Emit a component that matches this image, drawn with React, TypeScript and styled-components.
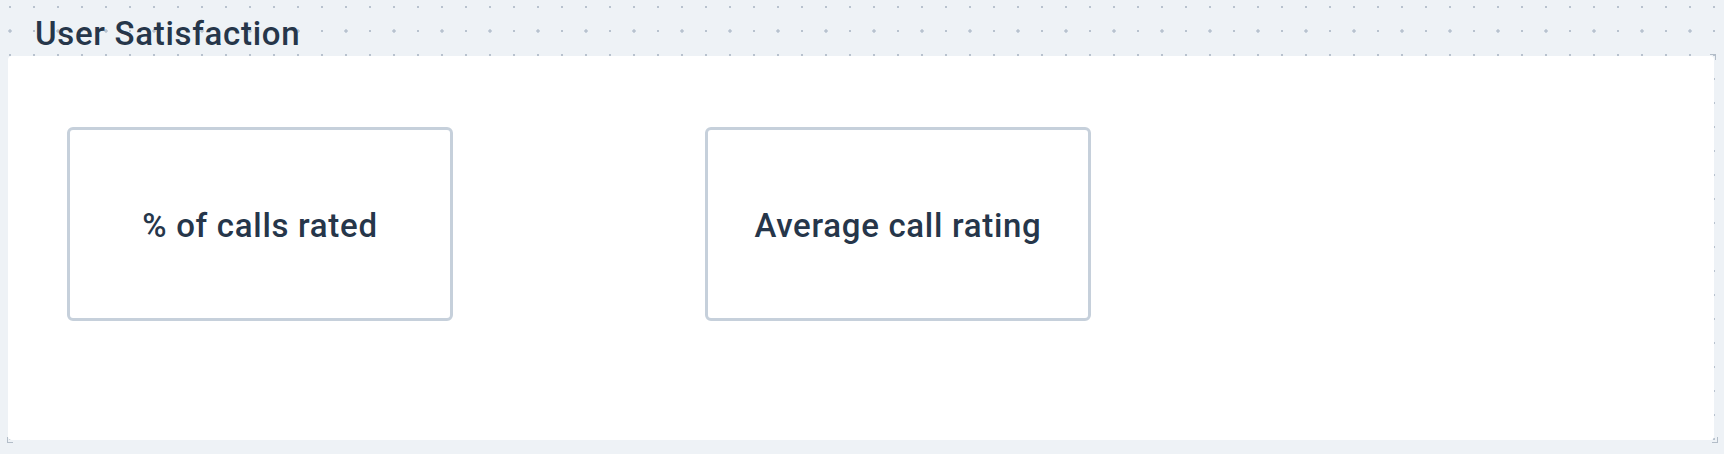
import React from "react";
import styled, { createGlobalStyle } from "styled-components";

const GlobalStyle = createGlobalStyle`
  html, body {
    margin: 0;
    padding: 0;
    background: #eef2f6;
  }
  body {
    font-family: Roboto, "Noto Sans", "Liberation Sans", sans-serif;
    color: #243447;
  }
`;

// dotted canvas, small dots every 24px and bigger ones every 48px
const Canvas = styled.div`
  width: 1724px;
  height: 454px;
  box-sizing: border-box;
  padding: 0 10px 0 8px;
  background-color: #eef2f6;
  background-image: radial-gradient(circle, #b8c2ce 0.9px, transparent 1.3px),
    radial-gradient(circle, #c9d2dd 1.6px, transparent 2.1px);
  background-size: 24px 24px, 48px 48px;
  background-position: -2px -5px, -14px 7px;
  overflow: hidden;
`;

const SectionTitle = styled.h2`
  margin: 0;
  padding: 14px 0 0 27px;
  height: 56px;
  box-sizing: border-box;
  font-size: 33px;
  line-height: 40px;
  font-weight: 500;
  letter-spacing: 0.7px;
  color: #26364a;
`;

const Panel = styled.div`
  position: relative;
  height: 384px;
  box-sizing: border-box;
  background: #ffffff;
  border-radius: 4px;
  padding: 71px 0 0 59px;
  display: flex;
  align-items: flex-start;
  gap: 252px;
`;

const Handle = styled.span<{ corner: "tr" | "bl" | "br" }>`
  position: absolute;
  width: 5px;
  height: 5px;
  border-color: #b3bdc8;
  border-style: solid;
  border-width: 0;
  ${(p) =>
    p.corner === "br"
      ? "right: -4px; bottom: -3px; border-right-width: 1px; border-bottom-width: 1px;"
      : p.corner === "tr"
      ? "right: -2px; top: -2px; border-right-width: 1px; border-top-width: 1px;"
      : "left: -1px; bottom: -3px; border-left-width: 1px; border-bottom-width: 1px;"}
`;

const MetricCard = styled.div`
  width: 386px;
  height: 194px;
  box-sizing: border-box;
  padding-top: 4px;
  border: 3px solid #c6d0db;
  border-radius: 6px;
  display: flex;
  align-items: center;
  justify-content: center;
`;

const MetricLabel = styled.span`
  font-size: 33px;
  line-height: 40px;
  font-weight: 500;
  letter-spacing: 0.7px;
  color: #26364a;
`;

const metrics = ["% of calls rated", "Average call rating"];

export default function App() {
  return (
    <>
      <GlobalStyle />
      <Canvas>
        <SectionTitle>User Satisfaction</SectionTitle>
        <Panel>
          {metrics.map((m) => (
            <MetricCard key={m}>
              <MetricLabel>{m}</MetricLabel>
            </MetricCard>
          ))}
          <Handle corner="tr" />
          <Handle corner="bl" />
          <Handle corner="br" />
        </Panel>
      </Canvas>
    </>
  );
}
